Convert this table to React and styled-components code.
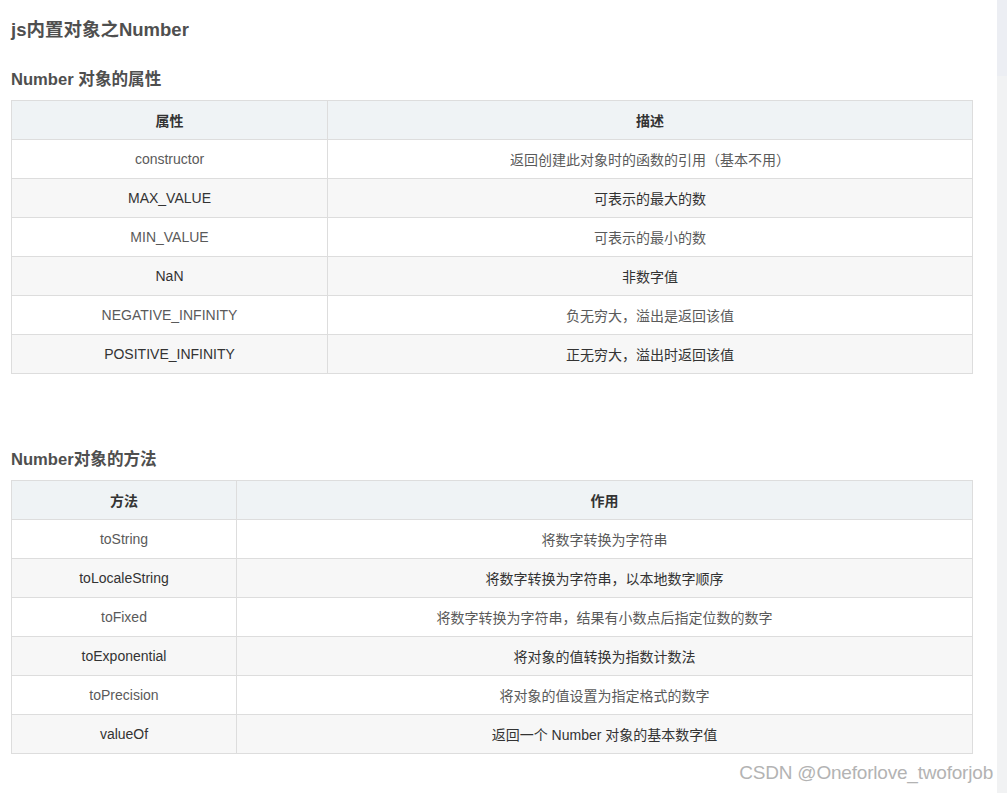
import React from 'react';
import styled, { createGlobalStyle } from 'styled-components';

const GlobalStyle = createGlobalStyle`
  html, body {
    margin: 0;
    padding: 0;
    background: #ffffff;
  }
  body {
    font-family: "Liberation Sans", "Noto Sans CJK SC", sans-serif;
  }
`;

const propRows = [
  ['constructor', '返回创建此对象时的函数的引用（基本不用）'],
  ['MAX_VALUE', '可表示的最大的数'],
  ['MIN_VALUE', '可表示的最小的数'],
  ['NaN', '非数字值'],
  ['NEGATIVE_INFINITY', '负无穷大，溢出是返回该值'],
  ['POSITIVE_INFINITY', '正无穷大，溢出时返回该值'],
];

const methodRows = [
  ['toString', '将数字转换为字符串'],
  ['toLocaleString', '将数字转换为字符串，以本地数字顺序'],
  ['toFixed', '将数字转换为字符串，结果有小数点后指定位数的数字'],
  ['toExponential', '将对象的值转换为指数计数法'],
  ['toPrecision', '将对象的值设置为指定格式的数字'],
  ['valueOf', '返回一个 Number 对象的基本数字值'],
];

const App = () => {
  return (
    <>
      <GlobalStyle />
      <Page>
        <Article>
          <Title>js内置对象之Number</Title>
          <SubTitle>Number 对象的属性</SubTitle>
          <DataTable rows={propRows} head={['属性', '描述']} firstWidth={316} />
          <SubTitle spaced>Number对象的方法</SubTitle>
          <DataTable rows={methodRows} head={['方法', '作用']} firstWidth={225} />
          <Watermark>CSDN @Oneforlove_twoforjob</Watermark>
        </Article>
        <ScrollTrack>
          <ScrollThumb />
        </ScrollTrack>
      </Page>
    </>
  );
};

const DataTable = ({ rows, head, firstWidth }) => (
  <Table>
    <colgroup>
      <col style={{ width: firstWidth }} />
      <col />
    </colgroup>
    <thead>
      <tr>
        <Th>{head[0]}</Th>
        <Th>{head[1]}</Th>
      </tr>
    </thead>
    <tbody>
      {rows.map((r, i) => (
        <Row key={r[0]} striped={i % 2 === 1}>
          <Td>{r[0]}</Td>
          <Td>{r[1]}</Td>
        </Row>
      ))}
    </tbody>
  </Table>
);

export default App;

const Page = styled.div`
  display: flex;
  width: 1007px;
  min-height: 793px;
`;

const Article = styled.div`
  flex: 1;
  position: relative;
  padding: 0 0 0 11px;
  color: #4d4d4d;
`;

const Title = styled.h1`
  margin: 0;
  padding-top: 19px;
  height: 22px;
  line-height: 22px;
  font-size: 18.5px;
  font-weight: 700;
  color: #4f4f4f;
`;

const SubTitle = styled.h2`
  margin: ${(p) => (p.spaced ? '76px 0 10px' : '29px 0 10px')};
  height: 20px;
  line-height: 20px;
  font-size: 16.6px;
  font-weight: 700;
  color: #4f4f4f;
`;

const Table = styled.table`
  width: 962px;
  border-collapse: collapse;
  table-layout: fixed;
  font-size: 14px;
`;

const Th = styled.th`
  height: 38px;
  padding: 0;
  border: 1px solid #dddddd;
  background: #eff3f5;
  font-size: 14px;
  font-weight: 700;
  color: #333333;
  text-align: center;
`;

const Row = styled.tr`
  background: ${(p) => (p.striped ? '#f7f7f7' : '#ffffff')};
  color: ${(p) => (p.striped ? '#333333' : '#5a5a5a')};
`;

const Td = styled.td`
  height: 38px;
  padding: 0;
  border: 1px solid #dddddd;
  text-align: center;
  font-size: 14px;
`;

const Watermark = styled.div`
  position: absolute;
  right: 4px;
  top: 761px;
  font-size: 19px;
  line-height: 24px;
  color: #b3b3b3;
  letter-spacing: -0.2px;
`;

const ScrollTrack = styled.div`
  width: 10px;
  background: #f1f2f3;
  display: flex;
  flex-direction: column;
`;

const ScrollThumb = styled.div`
  height: 76px;
  background: #eceef3;
`;
